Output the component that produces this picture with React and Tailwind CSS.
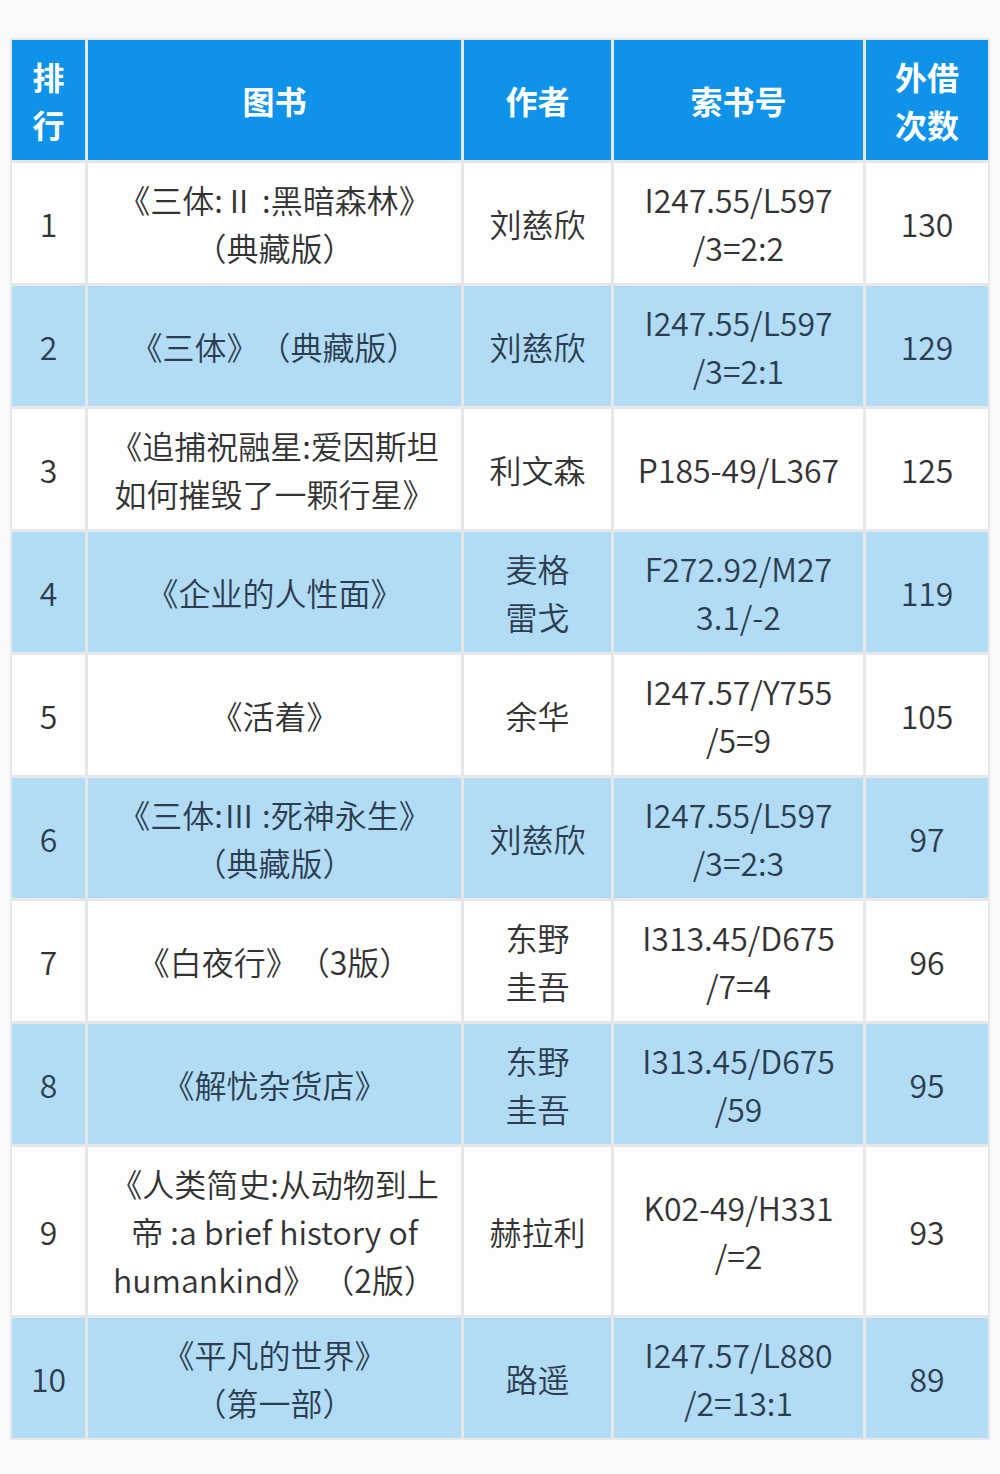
const rows = [
  { rank: "1", book: ["《三体:Ⅱ :黑暗森林》", "（典藏版）"], author: ["刘慈欣"], code: ["I247.55/L597", "/3=2:2"], count: "130" },
  { rank: "2", book: ["《三体》（典藏版）"], author: ["刘慈欣"], code: ["I247.55/L597", "/3=2:1"], count: "129" },
  { rank: "3", book: ["《追捕祝融星:爱因斯坦", "如何摧毁了一颗行星》"], author: ["利文森"], code: ["P185-49/L367"], count: "125" },
  { rank: "4", book: ["《企业的人性面》"], author: ["麦格", "雷戈"], code: ["F272.92/M27", "3.1/-2"], count: "119" },
  { rank: "5", book: ["《活着》"], author: ["余华"], code: ["I247.57/Y755", "/5=9"], count: "105" },
  { rank: "6", book: ["《三体:Ⅲ :死神永生》", "（典藏版）"], author: ["刘慈欣"], code: ["I247.55/L597", "/3=2:3"], count: "97" },
  { rank: "7", book: ["《白夜行》（3版）"], author: ["东野", "圭吾"], code: ["I313.45/D675", "/7=4"], count: "96" },
  { rank: "8", book: ["《解忧杂货店》"], author: ["东野", "圭吾"], code: ["I313.45/D675", "/59"], count: "95" },
  { rank: "9", book: ["《人类简史:从动物到上", "帝 :a brief history of", "humankind》 （2版）"], author: ["赫拉利"], code: ["K02-49/H331", "/=2"], count: "93" },
  { rank: "10", book: ["《平凡的世界》", "（第一部）"], author: ["路遥"], code: ["I247.57/L880", "/2=13:1"], count: "89" },
];

function Lines({ lines }) {
  return (
    <div className="text-center">
      {lines.map((l, i) => (
        <div key={i} className="whitespace-pre">{l}</div>
      ))}
    </div>
  );
}

function Cell({ children, head, blue }) {
  const bg = head
    ? "bg-[#0f93ea] text-white font-bold"
    : blue
    ? "bg-[#b2dcf6] text-[#2b3d4f] font-[350]"
    : "bg-[#fdfdfd] text-[#333333] font-[350]";
  return (
    <div className={`flex items-center justify-center py-3 min-h-[120px] ${bg}`}>
      {children}
    </div>
  );
}

export default function App() {
  return (
    <div
      className="min-h-[1474px] bg-[#f9f9f9] pt-[38px] px-[10px] text-[32px] leading-[48px] [text-spacing-trim:space-all]"
      style={{ fontFamily: '"Noto Sans CJK SC", "Noto Sans", sans-serif' }}
    >
      <div className="grid grid-cols-[73px_373px_147px_249px_122px] gap-[3px] p-[2px] bg-[#e5e7e9]">
        <Cell head><Lines lines={["排", "行"]} /></Cell>
        <Cell head><Lines lines={["图书"]} /></Cell>
        <Cell head><Lines lines={["作者"]} /></Cell>
        <Cell head><Lines lines={["索书号"]} /></Cell>
        <Cell head><Lines lines={["外借", "次数"]} /></Cell>

        {rows.map((r, i) => {
          const blue = i % 2 === 1;
          return [
            <Cell key={`${i}-a`} blue={blue}><Lines lines={[r.rank]} /></Cell>,
            <Cell key={`${i}-b`} blue={blue}><Lines lines={r.book} /></Cell>,
            <Cell key={`${i}-c`} blue={blue}><Lines lines={r.author} /></Cell>,
            <Cell key={`${i}-d`} blue={blue}><Lines lines={r.code} /></Cell>,
            <Cell key={`${i}-e`} blue={blue}><Lines lines={[r.count]} /></Cell>,
          ];
        })}
      </div>
    </div>
  );
}
